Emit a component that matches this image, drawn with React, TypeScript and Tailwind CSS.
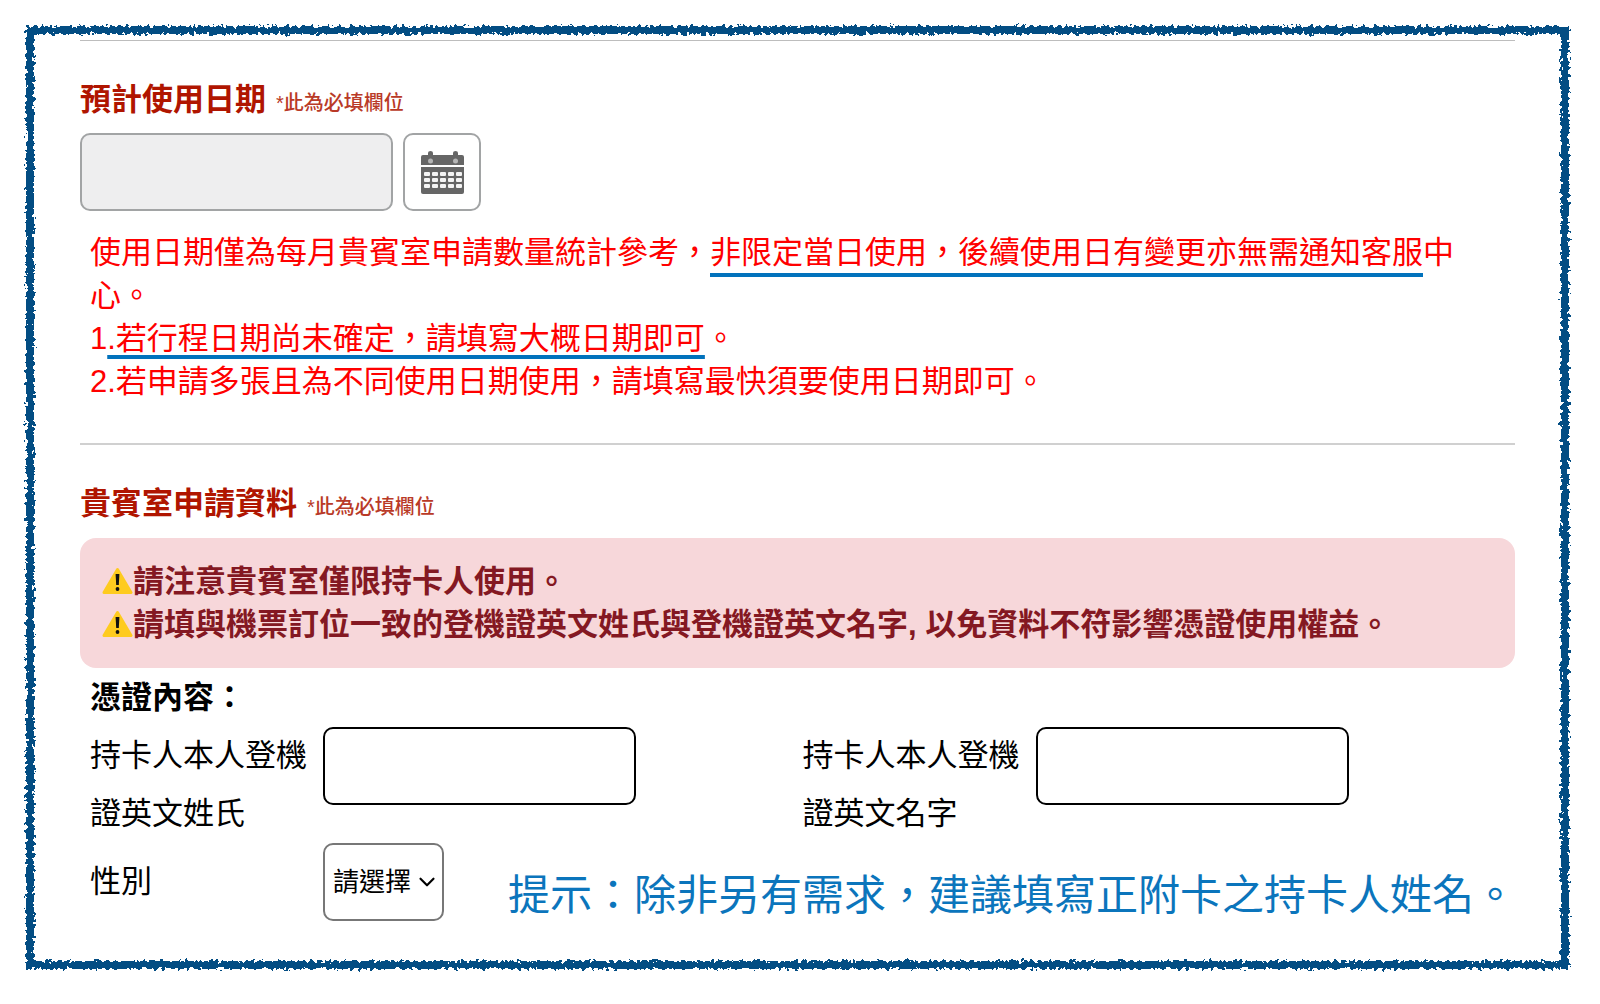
import { ChevronDown } from "lucide-react";
import React, { useState } from "react";

const CalendarIcon = () => (
  <svg viewBox="0 0 43 43" className="size-[43px]" aria-hidden="true">
    <path
      fill="#666666"
      d="M2 4h5V2q0-2 2.500-2T12 2v2h20V2q0-2 2.500-2T37 2v2h4q2 0 2 2v8H0V6q0-2 2-2z"
    />
    <circle cx="9.500" cy="10" r="2.500" fill="#b5b5b5" />
    <circle cx="34.500" cy="10" r="2.500" fill="#b5b5b5" />
    <path fill="#666666" d="M0 16h43v25q0 2-2 2H2q-2 0-2-2z" />
    {[21, 27, 33].map((y) =>
      [3, 11, 19, 27, 35].map((x) => (
        <rect key={`${x}-${y}`} x={x} y={y} width="6" height="4" rx="1" fill="#f4f4f4" />
      ))
    )}
  </svg>
);

const WarningIcon = () => (
  <svg
    viewBox="0 0 31 28"
    className="mb-[6px] inline-block h-7 w-[31px] align-middle"
    role="img"
    aria-label="warning"
  >
    <path
      d="M15.500 2.500 29 25.500H2z"
      fill="#fecb1f"
      stroke="#fecb1f"
      strokeWidth="3"
      strokeLinejoin="round"
    />
    <path d="M13.600 7h3.800l-.6 11h-2.600z" fill="#111111" />
    <circle cx="15.500" cy="22" r="1.900" fill="#111111" />
  </svg>
);

// Crayon-like outline: a plain rect roughened by noise
const RoughFrame = () => (
  <svg
    className="pointer-events-none absolute inset-0 size-full overflow-visible"
    aria-hidden="true"
  >
    <filter
      id="crayon"
      x="-2%"
      y="-2%"
      width="104%"
      height="104%"
      colorInterpolationFilters="sRGB"
    >
      <feTurbulence type="fractalNoise" baseFrequency="0.25" numOctaves="2" seed="4" result="noise" />
      <feDisplacementMap
        in="SourceGraphic"
        in2="noise"
        scale="8"
        xChannelSelector="R"
        yChannelSelector="G"
      />
    </filter>
    <rect
      width="100%"
      height="100%"
      fill="none"
      stroke="#034d83"
      strokeWidth="8"
      filter="url(#crayon)"
    />
  </svg>
);

const SectionTitle = ({ htmlFor, children }: { htmlFor?: string; children: React.ReactNode }) => (
  <h2 className="flex h-11 items-baseline gap-[10px] leading-[44px] text-[#b01500]">
    <label htmlFor={htmlFor} className="text-[31px] font-bold">
      {children}
    </label>
    <small className="text-[20px] font-medium text-[#b93a27]">*此為必填欄位</small>
  </h2>
);

const NameField = ({ id, label }: { id: string; label: string }) => {
  const [value, setValue] = useState("");

  return (
    <div className="flex items-start">
      <label htmlFor={id} className="mr-4 w-[217px] shrink-0 leading-[58px]">
        {label}
      </label>
      <input
        id={id}
        type="text"
        value={value}
        onChange={(e) => setValue(e.target.value)}
        className="h-[78px] w-[313px] rounded-[10px] border-2 border-black bg-white px-3"
      />
    </div>
  );
};

const underline =
  "underline decoration-[#0272bc] decoration-4 [text-decoration-skip-ink:none]";

const App = () => {
  const [gender, setGender] = useState("");

  return (
    <div
      lang="zh-Hant"
      className="flex min-h-screen flex-col bg-white pt-[30px] pr-[35px] pb-[39px] pl-[30px] font-['Liberation_Sans','Noto_Sans_CJK_TC',sans-serif] text-[31px] text-black"
    >
      <main className="relative flex-1 px-[50px] pt-[10px]">
        <RoughFrame />

        <section className="border-t border-[#bdbdbd] pt-[37px]">
          <SectionTitle htmlFor="date">預計使用日期</SectionTitle>
          <div className="mt-[11px] flex gap-[10px]">
            <input
              id="date"
              type="text"
              readOnly
              className="h-[78px] w-[313px] rounded-[10px] border-2 border-[#a2a4a5] bg-[#eeeeef] px-3"
            />
            <button
              type="button"
              aria-label="選擇日期"
              className="flex size-[78px] items-center justify-center rounded-[10px] border-2 border-[#a2a4a5] bg-white"
            >
              <CalendarIcon />
            </button>
          </div>
          <div className="mt-5 px-[10px] leading-[43px] text-[#ff0000]">
            <p>
              使用日期僅為每月貴賓室申請數量統計參考，
              <span className={`${underline} underline-offset-[10px]`}>
                非限定當日使用，後續使用日有變更亦無需通知客服
              </span>
              中心。
            </p>
            <p>
              1
              <span className={`${underline} underline-offset-[6px]`}>
                .若行程日期尚未確定，請填寫大概日期即可
              </span>
              。
            </p>
            <p>2.若申請多張且為不同使用日期使用，請填寫最快須要使用日期即可。</p>
          </div>
        </section>

        <section className="mt-10 border-t-2 border-[#d0d0d0] pt-[37px]">
          <SectionTitle>貴賓室申請資料</SectionTitle>
          <div
            role="alert"
            className="mt-3 rounded-2xl bg-[#f7d7da] px-[22px] py-[22px] leading-[43px] font-bold text-[#841822]"
          >
            <p>
              <WarningIcon />
              請注意貴賓室僅限持卡人使用。
            </p>
            <p>
              <WarningIcon />
              請填與機票訂位一致的登機證英文姓氏與登機證英文名字, 以免資料不符影響憑證使用權益。
            </p>
          </div>

          <form className="pt-2 pl-[10px]">
            <h3 className="leading-[43px] font-bold">憑證內容：</h3>
            <div className="mt-2 grid grid-cols-2">
              <NameField id="surname" label="持卡人本人登機證英文姓氏" />
              <NameField id="given-name" label="持卡人本人登機證英文名字" />
            </div>
            <div className="flex items-end">
              <label htmlFor="gender" className="mr-4 w-[217px] shrink-0 leading-[78px]">
                性別
              </label>
              <div className="relative shrink-0">
                <select
                  id="gender"
                  value={gender}
                  onChange={(e) => setGender(e.target.value)}
                  className="block h-[78px] w-[121px] appearance-none rounded-[10px] border-2 border-[#777777] bg-white pl-2 text-[26px]"
                >
                  <option value="">請選擇</option>
                  <option value="M">男</option>
                  <option value="F">女</option>
                </select>
                <ChevronDown
                  size={26}
                  strokeWidth={2}
                  className="pointer-events-none absolute top-[26px] right-1"
                />
              </div>
              <p className="ml-16 text-[42px] leading-[50px] whitespace-nowrap text-[#0b75bc]">
                提示：除非另有需求，建議填寫正附卡之持卡人姓名。
              </p>
            </div>
          </form>
        </section>
      </main>
    </div>
  );
};

export default App;
